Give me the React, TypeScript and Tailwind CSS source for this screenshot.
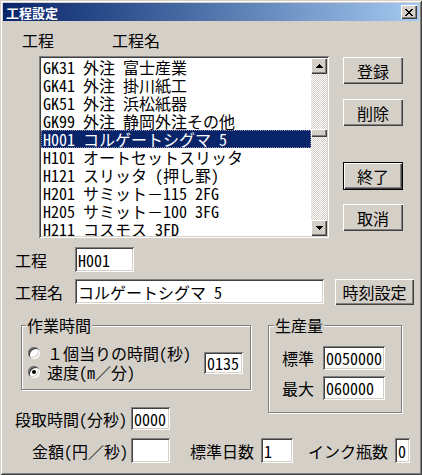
import React from "react";

const SUNKEN =
  "shadow-[inset_1px_1px_0_#808080,inset_-1px_-1px_0_#ffffff,inset_2px_2px_0_#404040,inset_-2px_-2px_0_#d4d0c8]";
const RAISED =
  "shadow-[inset_1px_1px_0_#ffffff,inset_-1px_-1px_0_#404040,inset_-2px_-2px_0_#808080]";
const ETCHED = "border border-[#808080] shadow-[1px_1px_0_#ffffff,inset_1px_1px_0_#ffffff]";

function Field({ className, value }: { className: string; value?: string }) {
  return (
    <div
      className={`${SUNKEN} bg-white flex items-center pl-[3px] text-[16px] leading-[16px] overflow-hidden whitespace-nowrap ${className}`}
    >
      {value}
    </div>
  );
}

function Btn({ label, className, isDefault }: { label: string; className: string; isDefault?: boolean }) {
  if (isDefault) {
    return (
      <div className={`border border-black bg-[#d4d0c8] ${className}`}>
        <div className={`${RAISED} w-full h-full flex items-center justify-center text-[16px] leading-[16px]`}>
          {label}
        </div>
      </div>
    );
  }
  return (
    <div className={`${RAISED} bg-[#d4d0c8] flex items-center justify-center text-[16px] leading-[16px] ${className}`}>
      {label}
    </div>
  );
}

function Radio({ checked }: { checked?: boolean }) {
  return (
    <div
      className={`w-[12px] h-[12px] rounded-full bg-white flex items-center justify-center shrink-0 shadow-[inset_1px_1px_0_#808080,inset_-1px_-1px_0_#ffffff,inset_2px_2px_0_#404040,inset_-2px_-2px_0_#d4d0c8]`}
    >
      {checked && <div className="w-[4px] h-[4px] rounded-full bg-black" />}
    </div>
  );
}

const items = [
  "GK31 外注 富士産業",
  "GK41 外注 掛川紙工",
  "GK51 外注 浜松紙器",
  "GK99 外注 静岡外注その他",
  "H001 コルゲートシグマ 5",
  "H101 オートセットスリッタ",
  "H121 スリッタ (押し罫)",
  "H201 サミット－115 2FG",
  "H205 サミット－100 3FG",
  "H211 コスモス 3FD",
];

export default function App() {
  return (
    <div className="w-[422px] h-[475px] bg-[#d4d0c8] text-black font-['Noto_Sans_Mono_CJK_JP','Noto_Sans_CJK_JP',sans-serif] shadow-[inset_1px_1px_0_#d4d0c8,inset_-1px_-1px_0_#404040,inset_2px_2px_0_#ffffff,inset_-2px_-2px_0_#808080] overflow-hidden flex flex-col">
      {/* Title bar */}
      <div className="mx-[3px] mt-[3px] h-[18px] bg-linear-to-r from-[#0a246a] to-[#a6caf0] flex items-center justify-between">
        <span className="pl-[3px] text-white font-bold text-[13px] leading-[13px] font-['Noto_Sans_CJK_JP',sans-serif]">
          工程設定
        </span>
        <div className={`${RAISED} bg-[#d4d0c8] w-[16px] h-[14px] mr-[2px] flex items-center justify-center`}>
          <svg width="8" height="7" viewBox="0 0 8 7" shapeRendering="crispEdges">
            <path d="M0 0h2v1h-2zM6 0h2v1h-2zM1 1h2v1h-2zM5 1h2v1h-2zM2 2h4v1h-4zM3 3h2v1h-2zM2 4h4v1h-4zM1 5h2v1h-2zM5 5h2v1h-2zM0 6h2v1h-2zM6 6h2v1h-2z" fill="#000" />
          </svg>
        </div>
      </div>

      {/* Headers */}
      <div className="mt-[11px] h-[16px] flex text-[16px] leading-[16px]">
        <span className="ml-[22px]">工程</span>
        <span className="ml-[58px]">工程名</span>
      </div>

      {/* List + buttons */}
      <div className="mt-[8px] flex items-start">
        <div className={`${SUNKEN} ml-[39px] w-[290px] h-[182px] bg-white p-[2px] flex`}>
          <div className="w-[270px] h-[178px] overflow-hidden">
            {items.map((t, i) => (
              <div
                key={i}
                className={`h-[18px] flex items-center pl-[2px] text-[16px] leading-[16px] whitespace-nowrap ${
                  i === 4 ? "bg-[#0a246a] text-white outline-1 outline-dotted outline-[#8c8cb0] -outline-offset-1" : ""
                }`}
              >
                {t}
              </div>
            ))}
          </div>
          <div className="w-[16px] h-[178px] flex flex-col">
            <div className={`${RAISED} bg-[#d4d0c8] h-[16px] flex items-center justify-center shrink-0`}>
              <svg width="7" height="4" viewBox="0 0 7 4" shapeRendering="crispEdges">
                <path d="M3 0h1v1h-1zM2 1h3v1h-3zM1 2h5v1h-5zM0 3h7v1h-7z" fill="#000" />
              </svg>
            </div>
            <div className="flex-1 flex flex-col bg-[repeating-conic-gradient(#ffffff_0_25%,#d4d0c8_0_50%)] bg-[length:2px_2px]">
              <div className={`${RAISED} bg-[#d4d0c8] mt-[55px] h-[8px]`} />
            </div>
            <div className={`${RAISED} bg-[#d4d0c8] h-[16px] flex items-center justify-center shrink-0`}>
              <svg width="7" height="4" viewBox="0 0 7 4" shapeRendering="crispEdges">
                <path d="M0 0h7v1h-7zM1 1h5v1h-5zM2 2h3v1h-3zM3 3h1v1h-1z" fill="#000" />
              </svg>
            </div>
          </div>
        </div>
        <div className="ml-[14px] mt-[1px] flex flex-col">
          <Btn label="登録" className="w-[60px] h-[27px]" />
          <Btn label="削除" className="w-[60px] h-[27px] mt-[15px]" />
          <Btn label="終了" className="w-[60px] h-[28px] mt-[36px]" isDefault />
          <Btn label="取消" className="w-[60px] h-[27px] mt-[14px]" />
        </div>
      </div>

      {/* 工程 */}
      <div className="mt-[9px] flex items-center text-[16px] leading-[16px]">
        <span className="w-[75px] pl-[15px]">工程</span>
        <Field className="w-[59px] h-[25px]" value="H001" />
      </div>

      {/* 工程名 */}
      <div className="mt-[7px] flex items-start text-[16px] leading-[16px]">
        <span className="w-[75px] pl-[15px] h-[25px] flex items-center">工程名</span>
        <Field className="w-[249px] h-[25px]" value="コルゲートシグマ 5" />
        <Btn label="時刻設定" className="ml-[11px] w-[79px] h-[26px]" />
      </div>

      {/* Group boxes */}
      <div className="mt-[20px] flex items-start text-[16px] leading-[16px]">
        <div className="ml-[15px] flex flex-col">
          <div className={`${ETCHED} relative ml-[6px] w-[230px] h-[65px] flex`}>
            <span className="absolute -top-[9px] left-[4px] px-[1px] bg-[#d4d0c8]">作業時間</span>
            <div className="w-[182px] pl-[6px] pt-[17px] flex flex-col">
              <div className="h-[19px] flex items-center">
                <Radio />
                <span className="ml-[7px]">１個当りの時間(秒)</span>
              </div>
              <div className="h-[19px] flex items-center">
                <Radio checked />
                <span className="ml-[7px]">速度(m／分)</span>
              </div>
            </div>
            <Field className="mt-[26px] w-[39px] h-[22px]" value="0135" />
          </div>
          <div className="mt-[17px] flex items-center">
            <span className="w-[116px]">段取時間(分秒)</span>
            <Field className="w-[39px] h-[23px]" value="0000" />
          </div>
        </div>
        <div className={`${ETCHED} relative ml-[17px] w-[134px] h-[88px] flex flex-col pt-[20px]`}>
          <span className="absolute -top-[9px] left-[5px] px-[1px] bg-[#d4d0c8]">生産量</span>
          <div className="flex items-center">
            <span className="w-[54px] pl-[13px]">標準</span>
            <Field className="w-[62px] h-[24px]" value="0050000" />
          </div>
          <div className="mt-[6px] flex items-center">
            <span className="w-[54px] pl-[13px]">最大</span>
            <Field className="w-[62px] h-[24px]" value="060000" />
          </div>
        </div>
      </div>

      {/* Bottom row */}
      <div className="mt-[8px] flex items-center text-[16px] leading-[16px]">
        <span className="w-[131px] pl-[32px]">金額(円／秒)</span>
        <Field className="w-[39px] h-[25px]" />
        <span className="ml-[20px]">標準日数</span>
        <Field className="ml-[7px] w-[32px] h-[25px]" value="1" />
        <span className="ml-[15px]">インク瓶数</span>
        <Field className="ml-[7px] w-[15px] h-[25px] pl-[2px]" value="0" />
      </div>
    </div>
  );
}
